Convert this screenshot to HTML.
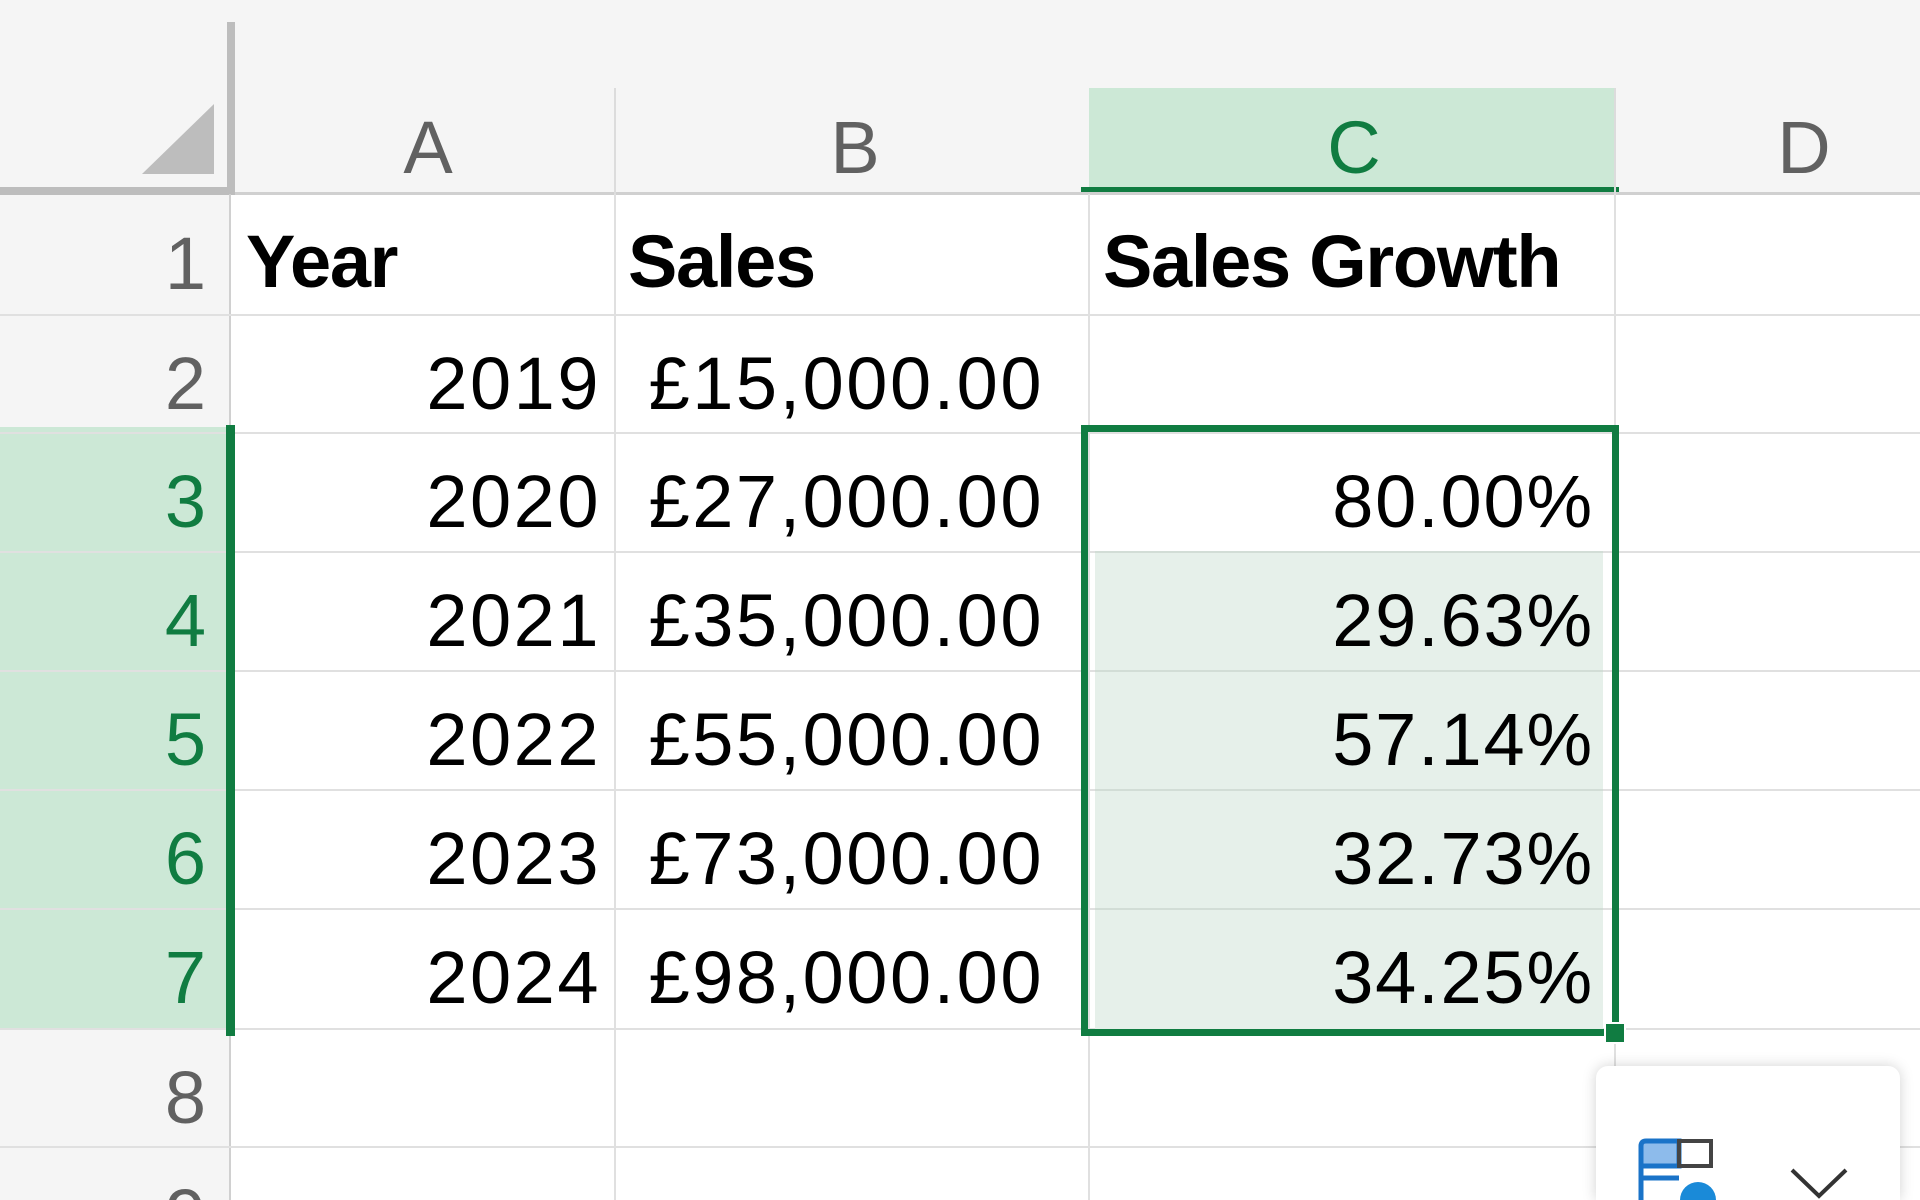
<!DOCTYPE html>
<html style="overflow:hidden;height:1200px"><head><meta charset="utf-8"><style>
*{margin:0;padding:0;box-sizing:border-box}
body{width:1920px;height:1200px;overflow:hidden;background:#fff;position:relative;font-family:"Liberation Sans",Arial,sans-serif}
.a{position:absolute}
.t{position:absolute;font-size:74px;line-height:85px;white-space:nowrap;color:#000}
.r{text-align:right}
.n{letter-spacing:2.5px}
.hl{position:absolute;height:2px;background:#e0e0e0}
.vl{position:absolute;width:2px;background:#e0e0e0}
</style></head><body>
<div class="a" style="left:0;top:0;width:1920px;height:194px;background:#f5f5f5"></div>
<div class="a" style="left:0;top:194px;width:231px;height:1006px;background:#f5f5f5"></div>
<div class="a" style="left:0;top:427px;width:229px;height:602px;background:#cce8d6"></div>
<div class="a" style="left:1089px;top:88px;width:526px;height:103px;background:#cce8d6"></div>
<div class="a" style="left:1081px;top:187px;width:538px;height:8px;background:#107c41"></div>
<div class="a" style="left:227px;top:22px;width:8px;height:172px;background:#bdbdbd"></div>
<div class="a" style="left:0;top:187px;width:235px;height:8px;background:#bdbdbd"></div>
<svg class="a" style="left:142px;top:104px" width="74" height="72"><polygon points="72,0 72,70 0,70" fill="#bdbdbd"/></svg>
<div class="a" style="left:235px;top:192px;width:1685px;height:3px;background:#d0d0d0"></div>
<div class="vl" style="left:614px;top:88px;height:106px;background:#dcdcdc"></div>
<div class="vl" style="left:1614px;top:88px;height:106px;background:#dcdcdc"></div>
<div class="vl" style="left:614px;top:194px;height:1006px"></div>
<div class="vl" style="left:1088px;top:194px;height:1006px"></div>
<div class="vl" style="left:1614px;top:194px;height:1006px"></div>
<div class="vl" style="left:229px;top:194px;height:1006px;background:#d0d0d0"></div>
<div class="hl" style="left:0;top:314px;width:1920px"></div>
<div class="hl" style="left:0;top:432px;width:1920px"></div>
<div class="hl" style="left:0;top:551px;width:1920px"></div>
<div class="hl" style="left:0;top:670px;width:1920px"></div>
<div class="hl" style="left:0;top:789px;width:1920px"></div>
<div class="hl" style="left:0;top:908px;width:1920px"></div>
<div class="hl" style="left:0;top:1028px;width:1920px"></div>
<div class="hl" style="left:0;top:1146px;width:1920px"></div>
<div class="a" style="left:226px;top:425px;width:9px;height:611px;background:#107c41"></div>
<div class="a" style="left:1095px;top:553px;width:508px;height:476px;background:#e6f0ea"></div>
<div class="hl" style="left:1095px;top:551px;width:508px;background:#d2ddd6"></div>
<div class="hl" style="left:1095px;top:670px;width:508px;background:#d2ddd6"></div>
<div class="hl" style="left:1095px;top:789px;width:508px;background:#d2ddd6"></div>
<div class="hl" style="left:1095px;top:908px;width:508px;background:#d2ddd6"></div>
<div class="a" style="left:1081px;top:425px;width:538px;height:611px;border:7px solid #107c41"></div>
<div class="a" style="left:1604px;top:1022px;width:22px;height:22px;background:#107c41;border:2px solid #fff"></div>
<div class="t" style="left:428px;top:105px;width:100px;margin-left:-50px;text-align:center;color:#616161">A</div>
<div class="t" style="left:855px;top:105px;width:100px;margin-left:-50px;text-align:center;color:#616161">B</div>
<div class="t" style="left:1354px;top:105px;width:100px;margin-left:-50px;text-align:center;color:#107c41">C</div>
<div class="t" style="left:1804px;top:105px;width:100px;margin-left:-50px;text-align:center;color:#616161">D</div>
<div class="t r" style="left:0;width:206px;top:221px;color:#616161">1</div>
<div class="t r" style="left:0;width:206px;top:341px;color:#616161">2</div>
<div class="t r" style="left:0;width:206px;top:459px;color:#107c41">3</div>
<div class="t r" style="left:0;width:206px;top:578px;color:#107c41">4</div>
<div class="t r" style="left:0;width:206px;top:697px;color:#107c41">5</div>
<div class="t r" style="left:0;width:206px;top:816px;color:#107c41">6</div>
<div class="t r" style="left:0;width:206px;top:935px;color:#107c41">7</div>
<div class="t r" style="left:0;width:206px;top:1055px;color:#616161">8</div>
<div class="t r" style="left:0;width:206px;top:1173px;color:#616161">9</div>
<div class="t" style="left:246px;top:219px;font-weight:bold;letter-spacing:-1.3px">Year</div>
<div class="t" style="left:628px;top:219px;font-weight:bold;letter-spacing:-1.3px">Sales</div>
<div class="t" style="left:1103px;top:219px;font-weight:bold;letter-spacing:-1.3px">Sales Growth</div>
<div class="t r n" style="left:300px;width:301px;top:341px">2019</div>
<div class="t r n" style="left:620px;width:1044px;left:0;top:341px">£15,000.00</div>
<div class="t r n" style="left:300px;width:301px;top:459px">2020</div>
<div class="t r n" style="left:0;width:1044px;top:459px">£27,000.00</div>
<div class="t r" style="left:1100px;width:494px;top:459px;letter-spacing:1.8px">80.00%</div>
<div class="t r n" style="left:300px;width:301px;top:578px">2021</div>
<div class="t r n" style="left:0;width:1044px;top:578px">£35,000.00</div>
<div class="t r" style="left:1100px;width:494px;top:578px;letter-spacing:1.8px">29.63%</div>
<div class="t r n" style="left:300px;width:301px;top:697px">2022</div>
<div class="t r n" style="left:0;width:1044px;top:697px">£55,000.00</div>
<div class="t r" style="left:1100px;width:494px;top:697px;letter-spacing:1.8px">57.14%</div>
<div class="t r n" style="left:300px;width:301px;top:816px">2023</div>
<div class="t r n" style="left:0;width:1044px;top:816px">£73,000.00</div>
<div class="t r" style="left:1100px;width:494px;top:816px;letter-spacing:1.8px">32.73%</div>
<div class="t r n" style="left:300px;width:301px;top:935px">2024</div>
<div class="t r n" style="left:0;width:1044px;top:935px">£98,000.00</div>
<div class="t r" style="left:1100px;width:494px;top:935px;letter-spacing:1.8px">34.25%</div>
<div class="a" style="left:1596px;top:1066px;width:304px;height:134px;background:#fff;border-radius:12px 12px 0 0;box-shadow:0 0 14px rgba(0,0,0,0.18)"></div>
<svg class="a" style="left:1638px;top:1138px" width="80" height="62">
<rect x="3" y="3" width="38" height="25" fill="#8dbbeb"/>
<path d="M3 62 V8 Q3 3 8 3 H41 V28 H3 M3 40 H41" fill="none" stroke="#1a73c8" stroke-width="5"/>
<rect x="41" y="3" width="32" height="25" fill="none" stroke="#444" stroke-width="4"/>
<circle cx="60" cy="62" r="18" fill="#1a8ad8"/>
</svg>
<svg class="a" style="left:1790px;top:1168px" width="60" height="32"><path d="M2 2 L29 28 L56 2" fill="none" stroke="#333" stroke-width="4"/></svg>
</body></html>
